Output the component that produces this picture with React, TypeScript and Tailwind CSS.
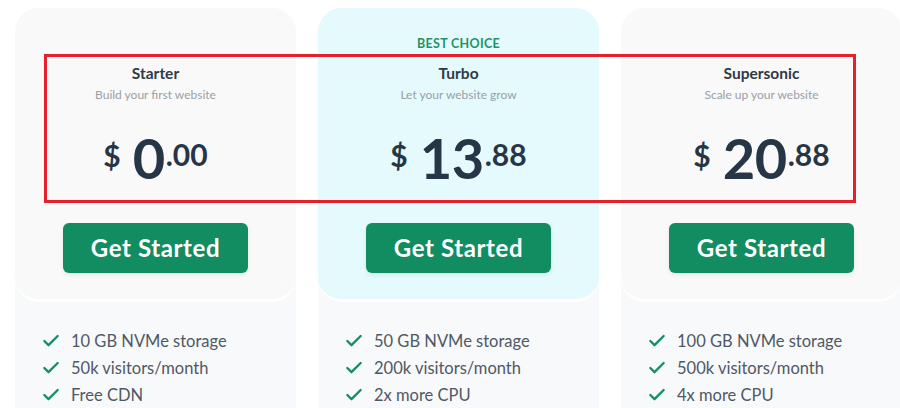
import { Check } from "lucide-react";

type Plan = {
  name: string;
  tagline: string;
  dollars: string;
  cents: string;
  features: string[];
  featured?: boolean;
};

const plans: Plan[] = [
  {
    name: "Starter",
    tagline: "Build your first website",
    dollars: "0",
    cents: ".00",
    features: ["10 GB NVMe storage", "50k visitors/month", "Free CDN"],
  },
  {
    name: "Turbo",
    tagline: "Let your website grow",
    dollars: "13",
    cents: ".88",
    features: ["50 GB NVMe storage", "200k visitors/month", "2x more CPU"],
    featured: true,
  },
  {
    name: "Supersonic",
    tagline: "Scale up your website",
    dollars: "20",
    cents: ".88",
    features: ["100 GB NVMe storage", "500k visitors/month", "4x more CPU"],
  },
];

function PlanColumn({ plan }: { plan: Plan }) {
  return (
    <div className="flex w-[281px] shrink-0 flex-col rounded-t-[24px] bg-[#f8f9fa]">
      <div
        className={`flex flex-col items-center rounded-[24px] border-b-[3px] border-white pt-[29px] pb-[26px] ${
          plan.featured ? "bg-[#e4fafc]" : "bg-[#f9f9f9]"
        }`}
      >
        <p className="h-[14px] text-[12.5px] leading-[14px] font-bold tracking-wide text-[#1f9467]">
          {plan.featured ? "BEST CHOICE" : ""}
        </p>
        <p className="mt-[12px] text-[15.5px] leading-5 font-bold text-[#2f3a47]">{plan.name}</p>
        <p className="mt-[2px] text-[12px] leading-5 text-[#9aa0a6]">{plan.tagline}</p>
        <div className="mt-[25px] flex items-start text-[#263646]">
          <span className="mt-[10px] mr-[12px] text-[30px] leading-none font-bold">$</span>
          <span className="text-[56px] leading-[56px] font-bold tracking-[-0.5px]">{plan.dollars}</span>
          <span className="mt-[9px] ml-[1px] text-[30px] leading-none font-bold">{plan.cents}</span>
        </div>
        <button className="mt-[37px] h-[50px] w-[185px] rounded-md bg-[#128d61] text-[24px] font-bold tracking-[0.6px] text-white shadow-[0_2px_4px_rgba(0,0,0,0.08)]">
          Get Started
        </button>
      </div>
      <ul className="flex flex-col gap-[5px] px-[26px] pt-[28px] pb-4">
        {plan.features.map((f) => (
          <li key={f} className="flex items-center gap-[10px] text-[16.5px] leading-[22px] text-[#4f5866]">
            <Check className="h-[20px] w-[20px] text-[#138f63]" strokeWidth={2.8} />
            <span>{f}</span>
          </li>
        ))}
      </ul>
    </div>
  );
}

export default function App() {
  return (
    <div className="relative h-[408px] w-[900px] overflow-hidden bg-white font-['Lato',sans-serif]">
      <div className="flex gap-[22px] pt-2 pl-[15px]">
        {plans.map((p) => (
          <PlanColumn key={p.name} plan={p} />
        ))}
      </div>
      <div className="pointer-events-none absolute top-[54px] left-[44px] h-[149px] w-[812px] border-[3px] border-[#e5202b]" />
    </div>
  );
}
